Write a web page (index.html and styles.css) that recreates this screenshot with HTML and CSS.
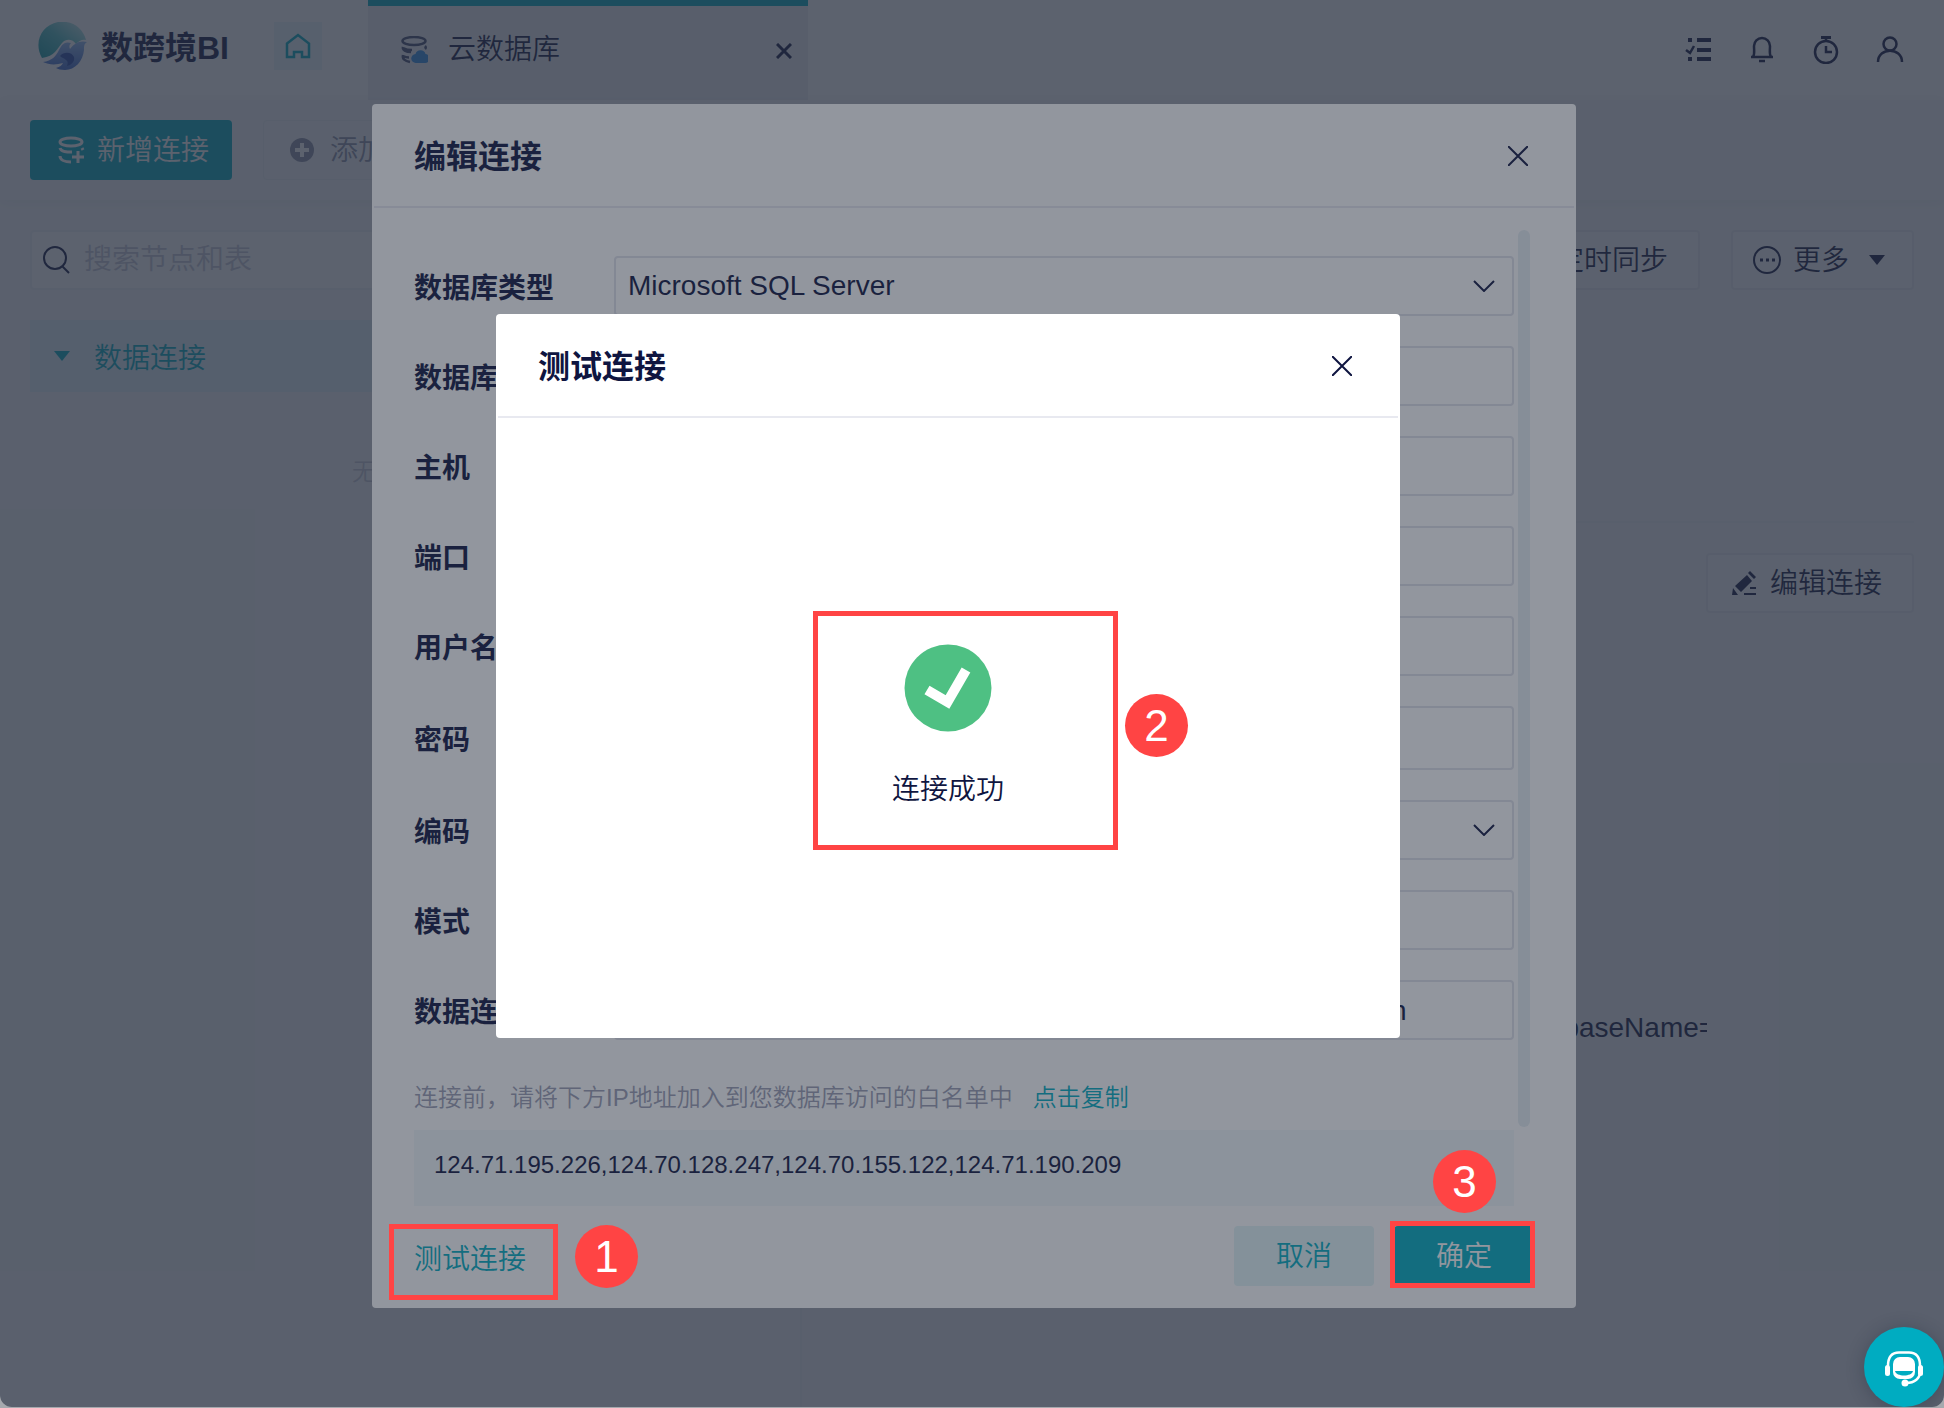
FILE: index.html
```html
<!DOCTYPE html>
<html lang="zh-CN">
<head>
  <meta charset="UTF-8" />
  <meta name="viewport" content="width=device-width, initial-scale=1.0" />
  <title>云数据库 - 数跨境BI</title>
  <link rel="stylesheet" href="styles.css">
</head>
<body>
  <div class="app">
    <header class="header">
      <div class="brand">
        <svg class="logo" viewBox="0 0 50 50">
          <defs>
            <linearGradient id="sky" x1="0" y1="1" x2="1" y2="0">
              <stop offset="0" stop-color="#0f9aa0" />
              <stop offset="0.5" stop-color="#4fbfc2" />
              <stop offset="1" stop-color="#d5f0f0" />
            </linearGradient>
            <linearGradient id="sea" x1="0" y1="0" x2="0" y2="1">
              <stop offset="0" stop-color="#8fb8ee" />
              <stop offset="1" stop-color="#3a66c8" />
            </linearGradient>
          </defs>
          <path fill="url(#sky)" d="M4 36C-5 20 4 3 20 0c14-2 25 6 28 18-4-1-7 1-10 4-3-5-10-6-14-1-5 6-7 13-20 15z" />
          <path fill="url(#sea)" d="M5 40c9-1 13-6 16-12 3-6 6-9 12-7-2 2-2 4-1 6 4-5 9-9 17-7-3 2-3 4-3 8-1 11-9 20-19 20-4 0-7-1-9-2 4-1 6-3 7-5-7 2-14 2-20-1z" />
          <path fill="#2448a8" d="M22 34c4-5 12-4 14 1 1 5-3 8-7 9 1-3 1-5-1-6-2-2-4-2-6-4z" />
        </svg>
        <span class="brand-name">数跨境BI</span>
      </div>
      <button class="home" aria-label="首页">
        <svg width="26" height="26" viewBox="0 0 26 26" fill="none" stroke="#00acc1" stroke-width="2.500">
          <path d="M2 10.500L13 2l11 8.500V24h-7v-5H9v5H2z" />
        </svg>
      </button>
      <div class="tab">
        <svg width="28" height="28" viewBox="0 0 28 28" fill="none" stroke="#454c6e" stroke-width="2.500">
          <ellipse cx="14" cy="5" rx="11.500" ry="4" />
          <path d="M3 11c-1 3 3 5 8 5M3 19c-1 4 2 6 7 7M3 12c3 1.500 6 2 9 2M3 20c2 1 4 1.500 6 1.500M25 10c1 1 1 2 0 3" />
          <path fill="#2f8fe8" stroke="none" d="M16 27a4.500 4.500 0 0 1-.500-9 5.200 5.200 0 0 1 10 0A4.500 4.500 0 0 1 25 27z" />
        </svg>
        <span class="tab-title">云数据库</span>
        <button class="tab-close" aria-label="关闭标签">
          <svg width="16" height="16" viewBox="0 0 16 16" stroke="currentColor" stroke-width="3"><path d="M1 1l14 14M15 1L1 15" /></svg>
        </button>
      </div>
      <nav class="header-icons">
        <button aria-label="任务">
          <svg width="28" height="28" viewBox="0 0 28 28" fill="currentColor">
            <path d="M13 2h14v4H13zM13 12h14v4H13zM13 21h14v4H13zM4 2h4v4H4zM4 21h4v4H4z" />
            <path d="M2 14l4 3 4-7" fill="none" stroke="currentColor" stroke-width="2.500" />
          </svg>
        </button>
        <button aria-label="通知">
          <svg width="28" height="28" viewBox="0 0 28 28" fill="none" stroke="currentColor" stroke-width="2.500">
            <path d="M3 21h22M5 21c2-3 1-6 1-11a8 8 0 0 1 16 0c0 5-1 8 1 11M11 25h6" />
          </svg>
        </button>
        <button aria-label="计划">
          <svg width="28" height="28" viewBox="0 0 28 28" fill="none" stroke="currentColor" stroke-width="2.500">
            <circle cx="14" cy="16" r="11" />
            <path d="M9 1.500h10" stroke-width="3" /><path d="M14 3v3M14 10v6h6" />
          </svg>
        </button>
        <button aria-label="账户">
          <svg width="28" height="28" viewBox="0 0 28 28" fill="none" stroke="currentColor" stroke-width="2.500">
            <circle cx="14" cy="8" r="6.500" /><path d="M2 26c0-15 24-15 24 0" />
          </svg>
        </button>
      </nav>
    </header>

    <div class="toolbar">
      <button class="btn btn-primary">
        <svg width="28" height="28" viewBox="0 0 28 28" fill="none" stroke="currentColor" stroke-width="3">
          <ellipse cx="14" cy="6" rx="11" ry="4" />
          <path d="M3 12c1 4 7 4 12 4M25 12l1 2M3 20c0 4 5 6 11 6M21 15v12M15 21h12" />
        </svg>
        <span>新增连接</span>
      </button>
      <button class="btn btn-muted">
        <svg width="28" height="28" viewBox="0 0 28 28">
          <circle cx="14" cy="14" r="12" fill="#8a8fa6" />
          <path d="M14 7v14M7 14h14" stroke="#fff" stroke-width="4" />
        </svg>
        <span>添加表</span>
      </button>
    </div>

    <main class="main">
      <aside class="sidebar">
        <div class="search">
          <svg width="28" height="28" viewBox="0 0 28 28" fill="none" stroke="currentColor" stroke-width="2">
            <circle cx="13" cy="12" r="11" /><path d="M20 20l7 7" />
          </svg>
          <input type="text" aria-label="搜索" placeholder="搜索节点和表" />
        </div>
        <div class="tree-row"><i class="caret"></i><span>数据连接</span></div>
        <p class="empty">无数据源</p>
      </aside>

      <section class="detail">
        <div class="detail-top">
          <button class="btn btn-sync"><span>定时同步</span></button>
          <button class="btn btn-more">
            <svg width="28" height="28" viewBox="0 0 28 28" fill="none" stroke="currentColor" stroke-width="2">
              <circle cx="14" cy="14" r="13" />
              <path d="M7 14h3M13 14h3M19 14h3" stroke-width="3" />
            </svg>
            <span>更多</span>
            <i class="caret"></i>
          </button>
        </div>
        <div class="detail-edit">
          <button class="btn btn-edit">
            <svg width="24" height="24" viewBox="0 0 24 24" fill="currentColor">
              <path d="M3 15L15 4l5 6L9 21zM16 2l2-2 6 6-2 2zM0 24l1-7 5 7zM18 16h6v2h-6zM12 22h12v2H12z" />
            </svg>
            <span>编辑连接</span>
          </button>
        </div>
        <dl class="info">
          <dt>数据库类型</dt><dd>SQL Server</dd>
          <dt>主机</dt><dd>hostname</dd>
          <dt>端口</dt><dd>1433</dd>
          <dt>用户名</dt><dd>admin</dd>
          <dt>编码</dt><dd>自动</dd>
          <dt>模式</dt><dd>dbo</dd>
          <dt>数据连接URL</dt><dd>jdbc:sqlserver://hostname:1433;databaseName=db_production</dd>
        </dl>
      </section>
    </main>

    <div class="mask">
      <div class="modal modal-edit" role="dialog" aria-labelledby="editTitle">
        <div class="modal-header">
          <h2 id="editTitle">编辑连接</h2>
          <button class="modal-close" aria-label="关闭">
            <svg width="20" height="20" viewBox="0 0 20 20" stroke="currentColor" stroke-width="2"><path d="M0 0l20 20M20 0L0 20" /></svg>
          </button>
        </div>
        <div class="modal-body">
          <form class="form">
            <div class="row">
              <label for="dbType">数据库类型</label>
              <div class="select">
                <select id="dbType"><option>Microsoft SQL Server</option></select>
                <svg width="22" height="12" viewBox="0 0 22 12" fill="none" stroke="currentColor" stroke-width="2"><path d="M1 1l10 10L21 1" /></svg>
              </div>
            </div>
            <div class="row"><label for="dbName">数据库名称</label><input type="text" id="dbName" /></div>
            <div class="row"><label for="host">主机</label><input type="text" id="host" /></div>
            <div class="row"><label for="port">端口</label><input type="text" id="port" /></div>
            <div class="row"><label for="user">用户名</label><input type="text" id="user" /></div>
            <div class="row"><label for="pass">密码</label><input type="password" id="pass" /></div>
            <div class="row">
              <label for="charset">编码</label>
              <div class="select">
                <select id="charset"><option>自动</option></select>
                <svg width="22" height="12" viewBox="0 0 22 12" fill="none" stroke="currentColor" stroke-width="2"><path d="M1 1l10 10L21 1" /></svg>
              </div>
            </div>
            <div class="row"><label for="schema">模式</label><input type="text" id="schema" /></div>
            <div class="row"><label for="url">数据连接URL</label><input type="text" id="url" value="jdbc:sqlserver://hostname:1433;databaseName=db_production" /></div>
            <p class="hint">连接前，请将下方IP地址加入到您数据库访问的白名单中<a href="#">点击复制</a></p>
            <div class="ips">124.71.195.226,124.70.128.247,124.70.155.122,124.71.190.209</div>
          </form>
          <div class="scrollbar"></div>
        </div>
        <div class="modal-footer">
          <a href="#" class="test-link">测试连接</a>
          <button class="btn btn-cancel"><span>取消</span></button>
          <button class="btn btn-ok"><span>确定</span></button>
        </div>
      </div>
    </div>

    <div class="mask mask-test">
      <div class="modal modal-test" role="dialog" aria-labelledby="testTitle">
        <div class="modal-header">
          <h2 id="testTitle">测试连接</h2>
          <button class="modal-close" aria-label="关闭">
            <svg width="20" height="20" viewBox="0 0 20 20" stroke="currentColor" stroke-width="2"><path d="M0 0l20 20M20 0L0 20" /></svg>
          </button>
        </div>
        <div class="result">
          <svg width="88" height="88" viewBox="0 0 88 88">
            <circle cx="44" cy="44" r="43.500" fill="#4ec083" />
            <path d="M23 46l20.500 12L62 26" fill="none" stroke="#fff" stroke-width="10" />
          </svg>
          <p>连接成功</p>
        </div>
      </div>
    </div>

    <!-- 操作步骤标注 -->
    <div class="steps">
      <div class="steps-area">
        <i class="frame frame-1"></i><b class="step step-1">1</b>
        <i class="frame frame-2"></i><b class="step step-2">2</b>
        <i class="frame frame-3"></i><b class="step step-3">3</b>
      </div>
    </div>

    <button class="support" aria-label="在线客服">
      <svg width="40" height="36" viewBox="0 0 40 36">
        <rect x="9" y="6" width="22" height="22" rx="7" fill="#fff" />
        <path d="M11 20h18c-1 6-17 6-18 0z" fill="#00acc1" />
        <path d="M4 15C4 5 9 1.500 15 1.500h10c6 0 11 3.500 11 13.500v6c0 6-5 11-14 11" fill="none" stroke="#fff" stroke-width="2.500" />
        <rect x="1" y="14" width="5" height="11" rx="2.500" fill="#fff" />
        <rect x="34" y="14" width="5" height="11" rx="2.500" fill="#fff" />
        <circle cx="21" cy="32" r="3.500" fill="#fff" />
      </svg>
    </button>
  </div>
</body>
</html>
```
FILE: styles.css
```css
* { box-sizing: border-box; }
body {
  margin: 0; background: #a6a9ae; color: #0f1540;
  font-family: "Liberation Sans", "Noto Sans CJK SC", sans-serif; font-size: 28px; line-height: 40px; font-weight: 350;
}
button, input, select { font: inherit; color: inherit; }
button { border: none; background: none; padding: 0; cursor: pointer; }
svg { display: block; flex: none; }
a { color: #00acc1; text-decoration: none; }
h2, p, dl, dd { margin: 0; }

.app {
  position: relative; display: flex; flex-direction: column; min-height: calc(100vh - 1px);
  background: #f8f9fb; border-radius: 0 0 12px 12px; overflow: hidden;
}

/* 顶部 */
.header { display: flex; height: 100px; background: #fff; }
.brand { display: flex; gap: 13px; width: 274px; padding: 22px 0 0 38px; }
.logo { width: 50px; height: 50px; }
.brand-name { font-size: 32px; line-height: 52px; font-weight: 700; white-space: nowrap; }
.home { display: grid; place-items: center; width: 48px; height: 48px; margin: 22px 46px 0 0; background: #eaf8fa; }
.tab { display: flex; align-items: center; width: 440px; padding: 0 16px 6px 32px; background: #f0f1f5; border-top: 6px solid #00acc1; }
.tab-title { flex: 1; padding-left: 20px; }
.tab-close { padding-top: 2px; }
.header-icons { display: flex; align-items: center; gap: 36px; margin-left: auto; padding-right: 40px; }

/* 按钮 */
.btn {
  display: flex; align-items: center; justify-content: center; gap: 14px; height: 60px;
  padding: 0 26px; border-radius: 4px; white-space: nowrap;
}
.btn span { padding-top: 2px; }
.btn-primary, .btn-ok { background: #00acc1; color: #fff; }
.btn-primary { width: 202px; padding: 0 0 0 4px; gap: 12px; }
.btn-muted { border: 1px solid #eceef3; color: #8a8fa6; padding: 0 24px; }
.btn-sync, .btn-more, .btn-edit { border: 2px solid #ebedf3; background: #fdfdfe; }
.btn-sync { padding: 0 30px; }
.btn-more { padding: 0 27px 0 20px; gap: 12px; }
.btn-more .caret { margin-left: 8px; }
.btn-edit { padding: 0 30px 0 24px; }
.btn-cancel { width: 140px; background: #e2f4f6; color: #00acc1; }
.btn-ok { width: 140px; }
.caret { border: 8px solid transparent; border-top: 10px solid currentColor; border-bottom: 0; }

.toolbar { display: flex; gap: 31px; height: 100px; padding: 20px 30px; background: #f7f8fa; box-shadow: 0 2px 12px rgba(20, 30, 60, 0.06); }

/* 主体 */
.main { display: flex; flex: 1; }
.sidebar { width: 802px; padding: 30px; border-right: 2px solid #f1f2f6; }
.search { display: flex; align-items: center; gap: 14px; height: 60px; padding: 0 10px; border: 2px solid #f1f2f6; border-radius: 4px; background: #fff; }
.search input { flex: 1; min-width: 0; border: none; outline: none; background: none; padding: 0; }
.search input::placeholder { color: #c6c9d6; opacity: 1; }
.tree-row { display: flex; align-items: center; gap: 24px; height: 72px; margin-top: 30px; padding: 0 24px; background: #e2f2fb; color: #00acc1; }
.tree-row span { padding-top: 6px; }
.empty { margin-top: 60px; font-size: 24px; text-align: center; color: #c6c9d6; }

.detail { flex: 1; min-width: 0; padding: 30px; }
.detail-top { display: flex; justify-content: flex-end; gap: 31px; height: 293px; border-bottom: 2px solid #f1f2f6; }
.detail-edit { display: flex; justify-content: flex-end; padding-top: 30px; }
.info { display: grid; grid-template-columns: 280px 1fr; grid-auto-rows: 60px; margin: 24px 207px 0 0; line-height: 62px; }
.info dd { overflow: hidden; white-space: nowrap; }

/* 弹窗 */
.mask {
  position: absolute; inset: 0; display: flex; justify-content: center; align-items: flex-start;
  padding: 104px 0 0 4px; background: rgba(37, 45, 61, 0.5);
}
.mask-test { padding: 314px 48px 0 0; }
.modal { background: #fff; border-radius: 4px; }
.modal-edit { width: 1204px; }
.modal-test { width: 904px; height: 724px; }
.modal-header {
  display: flex; align-items: center; justify-content: space-between; height: 104px;
  margin: 0 2px; padding: 2px 46px 0 40px; border-bottom: 2px solid #e8e9f0;
}
.modal-header h2 { padding-top: 2px; font-size: 32px; font-weight: 700; }
.modal-body { display: flex; gap: 4px; padding: 0 46px 0 42px; }
.form { flex: 1; padding-top: 48px; }
.row { display: flex; align-items: center; margin-bottom: 30px; }
.row label { width: 200px; padding-top: 6px; font-weight: 700; white-space: nowrap; }
.row input, .row select {
  flex: 1; width: 100%; height: 60px; padding: 0 12px; border: 2px solid #e0e2ea; border-radius: 4px;
  background: #fff; outline: none; appearance: none;
}
.row input[type="text"] { padding: 2px 10px 0; }
.row input[type="password"] { height: 64px; }
.select { position: relative; flex: 1; }
.select select { display: block; }
.select svg { position: absolute; right: 19px; top: 24px; pointer-events: none; }
.hint { margin-top: 38px; font-size: 24px; color: #9a9db2; }
.hint a { margin-left: 20px; }
.ips { height: 76px; margin-top: 12px; padding: 15px 20px; background: #f3f8fb; font-size: 24px; }
.scrollbar { width: 12px; margin: 22px 0 79px; border-radius: 6px; background: #e6eff3; }
.modal-footer { display: flex; gap: 20px; padding: 20px 42px 22px; }
.test-link { margin-right: auto; padding-top: 14px; }

.result { display: flex; flex-direction: column; align-items: center; gap: 38px; padding-top: 226px; }

/* 步骤标注 */
.steps { position: absolute; inset: 0; display: flex; justify-content: center; padding: 104px 0 0 4px; pointer-events: none; }
.steps-area { position: relative; width: 1204px; }
.frame, .step { position: absolute; }
.frame { border: 5px solid #ff4444; }
.frame-1 { left: 17px; top: 1120px; width: 169px; height: 76px; }
.frame-2 { left: 441px; top: 507px; width: 305px; height: 239px; }
.frame-3 { left: 1018px; top: 1117px; width: 145px; height: 67px; }
.step { width: 63px; height: 63px; border-radius: 50%; background: #ff4444; color: #fff; font-size: 44px; line-height: 63px; font-weight: 400; text-align: center; }
.step-1 { left: 203px; top: 1121px; }
.step-2 { left: 753px; top: 590px; }
.step-3 { left: 1061px; top: 1046px; }

.support {
  position: absolute; right: 0; bottom: 0; display: grid; place-items: center; width: 80px; height: 80px;
  padding-top: 4px; border-radius: 50%; background: #00acc1; box-shadow: 0 2px 18px rgba(20, 30, 50, 0.3);
}
```
